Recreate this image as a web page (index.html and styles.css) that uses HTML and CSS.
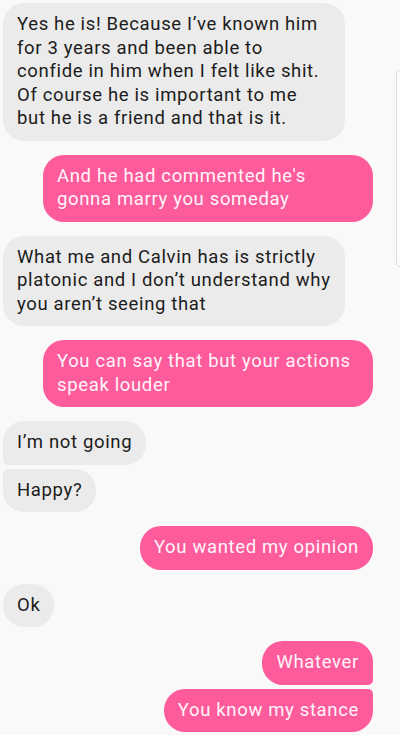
FILE: index.html
```html
<!DOCTYPE html>
<html lang="en">
<head>
    <meta charset="UTF-8" />
    <meta name="viewport" content="width=device-width, initial-scale=1" />
    <title>Conversa</title>
    <link rel="stylesheet" href="styles.css">
</head>
<body>
<div class="conversa">
    <div class="msg recebida">Yes he is! Because I’ve known him for 3 years and been able to confide in him when I felt like shit. Of course he is important to me<br>but he is a friend and that is it.</div>
    <div class="msg enviada">And he had commented he's gonna marry you someday</div>
    <div class="msg recebida">What me and Calvin has is strictly platonic and I don’t understand why you aren’t seeing that</div>
    <div class="msg enviada">You can say that but your actions speak louder</div>
    <div class="msg recebida grupo-inicio">I’m not going</div>
    <div class="msg recebida grupo-fim">Happy?</div>
    <div class="msg enviada">You wanted my opinion</div>
    <div class="msg recebida">Ok</div>
    <div class="msg enviada grupo-inicio">Whatever</div>
    <div class="msg enviada grupo-fim">You know my stance</div>
</div>
<div class="barra-rolagem"></div>
</body>
</html>
```

FILE: styles.css
```css
:root {
    --cor-fundo: #f9f9f9;
    --cor-recebida: #ebebeb;
    --cor-enviada: #fd5b9b;
    --cor-texto: #1c1c1c;
    --cor-texto-enviada: #fff4f8;
}

html, body {
    margin: 0;
    height: 100%;
    background: var(--cor-fundo);
    font-family: Roboto, 'Noto Sans', sans-serif;
    overflow: hidden;
}

.conversa {
    display: flex;
    flex-direction: column;
    padding: 3px 27px 0 3px;
}

.msg {
    box-sizing: border-box;
    padding: 10px 14px;
    font-size: 18.5px;
    letter-spacing: 0.65px;
    line-height: 23.5px;
    border-radius: 21px;
    margin-top: 14px;
}

.msg:first-child {
    margin-top: 0;
}

.recebida {
    align-self: flex-start;
    max-width: 342px;
    background: var(--cor-recebida);
    color: var(--cor-texto);
}

.enviada {
    align-self: flex-end;
    max-width: 330px;
    background: var(--cor-enviada);
    color: var(--cor-texto-enviada);
}

.grupo-fim {
    margin-top: 4px;
}

.recebida.grupo-inicio {
    border-bottom-left-radius: 5px;
}

.recebida.grupo-fim {
    border-top-left-radius: 5px;
}

.enviada.grupo-inicio {
    border-bottom-right-radius: 5px;
}

.enviada.grupo-fim {
    border-top-right-radius: 5px;
}

.barra-rolagem {
    position: absolute;
    top: 70px;
    right: -4px;
    width: 6px;
    height: 195px;
    border: 1px solid #dcdcdc;
    border-radius: 4px;
    background: #fdfdfd;
}
```
